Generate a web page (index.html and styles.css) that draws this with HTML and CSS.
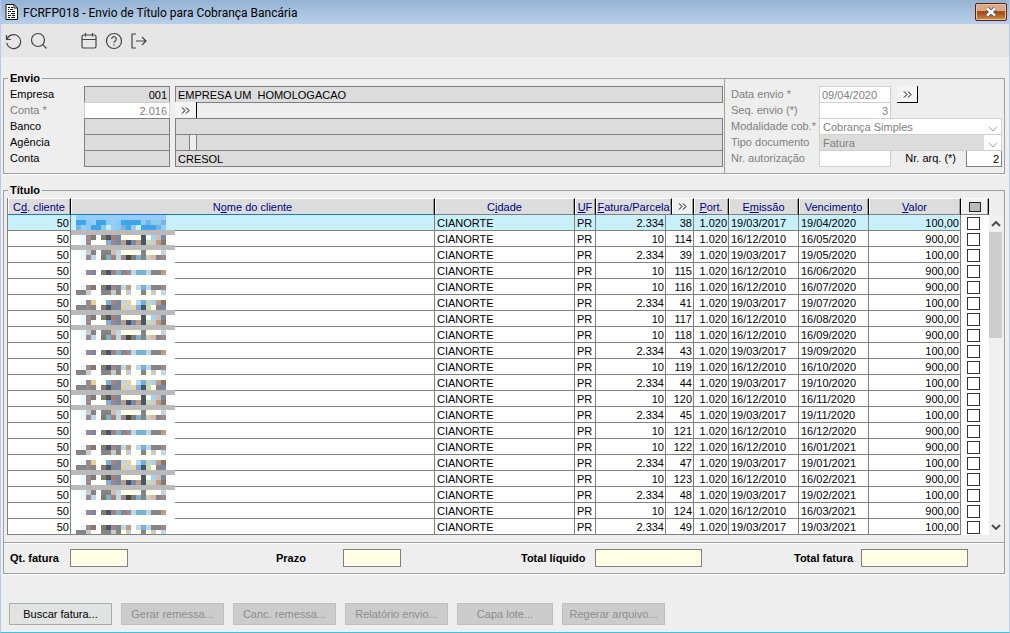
FILE: index.html
```html
<!DOCTYPE html>
<html lang="pt-BR">
<head>
    <meta charset="UTF-8">
    <meta name="viewport" content="width=device-width, initial-scale=1.0">
    <title>FCRFP018 - Envio de Título para Cobrança Bancária</title>
    <link rel="stylesheet" href="styles.css">
</head>
<body>
    <div class="window">
        <header class="titlebar">
            <svg class="app-icon" width="14" height="16" viewBox="0 0 14 16">
                <path d="M1 0.500h8l3.500 3.500v11.500H1z" fill="#fff" stroke="#111"/>
                <path d="M9 0.500v3.500h3.500" fill="none" stroke="#111"/>
                <path d="M3 3.500h2M6 3.500h2M3 5.500h1M5 5.500h3M3 7.500h3M7 7.500h3M3 9.500h1M6 9.500h4M3 11.500h3M7 11.500h3M3 13.500h2M6 13.500h4" stroke="#111"/>
            </svg>
            <h1>FCRFP018 - Envio de Título para Cobrança Bancária</h1>
            <button class="close" aria-label="Fechar">
                <svg width="12" height="10" viewBox="0 0 12 10">
                    <path d="M2 1.500l8 7M10 1.500l-8 7" stroke="#4a4a50" stroke-width="4"/>
                    <path d="M2 1.500l8 7M10 1.500l-8 7" stroke="#fff" stroke-width="2.400"/>
                </svg>
            </button>
        </header>

        <nav class="toolbar">
            <button aria-label="Desfazer">
                <svg viewBox="0 0 18 18"><path d="M1.500 3v4.500h4.500M2 7.500a7 7 0 1 1-.2 3.500"/></svg>
            </button>
            <button aria-label="Pesquisar">
                <svg viewBox="0 0 18 18"><circle cx="8" cy="8" r="6.500"/><path d="M12.700 12.700l3.800 3.800"/></svg>
            </button>
            <button class="apart" aria-label="Calendário">
                <svg viewBox="0 0 18 18"><rect x="2" y="3" width="14" height="13" rx="1.500"/><path d="M2 7.500h14M5.500 1v3.500M12.500 1v3.500"/></svg>
            </button>
            <button aria-label="Ajuda">
                <svg viewBox="0 0 18 18"><circle cx="9" cy="9" r="7.500"/><path d="M6.700 7a2.300 2.300 0 1 1 3.600 1.900c-.9.600-1.300.9-1.300 1.800M9 12.300v1.300"/></svg>
            </button>
            <button aria-label="Sair">
                <svg viewBox="0 0 18 18"><path d="M6 2H2v14h4M6 9h10M12 5l4 4-4 4"/></svg>
            </button>
        </nav>

        <main>
            <fieldset class="envio">
                <legend>Envio</legend>
                <div class="conta">
                    <label for="empresa">Empresa</label>
                    <input class="num" id="empresa" value="001" readonly>
                    <input class="desc" aria-label="Nome da empresa" value="EMPRESA UM  HOMOLOGACAO" readonly>

                    <label class="off" for="conta">Conta *</label>
                    <input class="num open" id="conta" value="2.016" readonly>
                    <button class="more" aria-label="Buscar conta"><svg viewBox="0 0 9 7"><path d="M1 .5l3 3-3 3M5 .5l3 3-3 3"/></svg></button>

                    <label for="banco">Banco</label>
                    <input id="banco" readonly>
                    <input class="desc" aria-label="Nome do banco" readonly>

                    <label for="agencia">Agência</label>
                    <input id="agencia" readonly>
                    <div class="desc split">
                        <input aria-label="Dígito da agência" readonly>
                        <input aria-label="Nome da agência" readonly>
                    </div>

                    <label for="conta_nr">Conta</label>
                    <input id="conta_nr" readonly>
                    <input class="desc" aria-label="Nome da conta" value="CRESOL" readonly>
                </div>
                <div class="dados">
                    <label for="data">Data envio *</label>
                    <input class="open" id="data" value="09/04/2020" readonly>
                    <button class="more raised" aria-label="Escolher data"><svg viewBox="0 0 9 7"><path d="M1 .5l3 3-3 3M5 .5l3 3-3 3"/></svg></button>

                    <label for="seq">Seq. envio (*)</label>
                    <input class="num open" id="seq" value="3" readonly>

                    <label for="modalidade">Modalidade cob.*</label>
                    <div class="combo">
                        <select id="modalidade"><option>Cobrança Simples</option></select>
                        <svg viewBox="0 0 10 6"><path d="M1 1l4 4 4-4"/></svg>
                    </div>

                    <label for="tipo">Tipo documento</label>
                    <div class="combo gray">
                        <select id="tipo"><option>Fatura</option></select>
                        <svg viewBox="0 0 10 6"><path d="M1 1l4 4 4-4"/></svg>
                    </div>

                    <label for="autorizacao">Nr. autorização</label>
                    <input class="open" id="autorizacao">
                    <div class="arquivo">
                        <label for="arquivo">Nr. arq. (*)</label>
                        <input class="num" id="arquivo" value="2">
                    </div>
                </div>
            </fieldset>

            <fieldset class="titulo">
                <legend>Título</legend>
                <div class="grid">
                    <table>
                        <colgroup>
                            <col class="c-cd"><col><col class="c-cidade"><col class="c-uf"><col class="c-data">
                            <col class="c-fill"><col class="c-more"><col class="c-port"><col class="c-data"><col class="c-data">
                            <col class="c-valor"><col class="c-check">
                        </colgroup>
                        <thead>
                            <tr>
                                <th>C<u>d</u>. cliente</th>
                                <th>N<u>o</u>me do cliente</th>
                                <th>C<u>i</u>dade</th>
                                <th><u>U</u>F</th>
                                <th colspan="2"><u>F</u>atura/Parcela</th>
                                <th class="light"><button aria-label="Ordenar"><svg viewBox="0 0 9 7"><path d="M1 .5l3 3-3 3M5 .5l3 3-3 3"/></svg></button></th>
                                <th><u>P</u>ort.</th>
                                <th>E<u>m</u>issão</th>
                                <th>Vencimen<u>t</u>o</th>
                                <th><u>V</u>alor</th>
                                <th class="light"><button aria-label="Marcar todos"><i class="mark"></i></button></th>
                            </tr>
                        </thead>
                        <tbody id="rows"></tbody>
                    </table>
                    <div class="scroll">
                        <button aria-label="Subir"><svg viewBox="0 0 10 6"><path d="M1 5l4-4 4 4"/></svg></button>
                        <div class="thumb"></div>
                        <button aria-label="Descer"><svg viewBox="0 0 10 6"><path d="M1 1l4 4 4-4"/></svg></button>
                    </div>
                    <svg class="mosaic" id="mosaic" width="104" height="319" shape-rendering="crispEdges"></svg>
                </div>
                <div class="totais">
                    <div><label for="qt">Qt. fatura</label><input id="qt" readonly></div>
                    <div><label for="prazo">Prazo</label><input id="prazo" readonly></div>
                    <div class="wide"><label for="liquido">Total líquido</label><input id="liquido" readonly></div>
                    <div class="wide"><label for="total">Total fatura</label><input id="total" readonly></div>
                </div>
            </fieldset>

            <div class="actions">
                <button>Buscar fatura...</button>
                <button disabled>Gerar remessa...</button>
                <button disabled>Canc. remessa...</button>
                <button disabled>Relatório envio...</button>
                <button class="short" disabled>Capa lote...</button>
                <button disabled>Regerar arquivo...</button>
            </div>
        </main>
    </div>
    <script src="script.js"></script>
</body>
</html>
```
FILE: styles.css
```css
* {
    box-sizing: border-box;
}
body {
    margin: 0;
    font-family: "Liberation Sans", Arial, sans-serif;
    font-size: 11px;
    line-height: 14px;
    color: #000;
    background-color: #eeeeee;
}
button, input, select {
    font: inherit;
    color: inherit;
    margin: 0;
    padding: 0;
    border-radius: 0;
}
svg {
    fill: none;
    display: block;
}
.window {
    min-height: 100vh;
    border: 1px solid #b4cbe9;
    border-top: 0;
    border-bottom-color: #35c4e6;
}

/* title bar */
.titlebar {
    display: flex;
    align-items: center;
    height: 24px;
    padding: 0 2px 0 4px;
    background: linear-gradient(#94b3d3, #b9cfe9);
}
.titlebar h1 {
    flex: 1;
    margin: 2px 0 0 4px;
    font-family: Roboto, sans-serif;
    font-size: 12px;
    font-weight: normal;
}
.close {
    display: flex;
    align-items: center;
    justify-content: center;
    width: 32px;
    height: 18px;
    border: 1px solid #5c1f1c;
    border-radius: 2px;
    box-shadow: inset 0 0 0 1px #e8c3a0;
    background: linear-gradient(#d9a988 0 45%, #a8501c 45% 60%, #d59246);
}

/* toolbar */
.toolbar {
    display: flex;
    align-items: center;
    gap: 7px;
    height: 33px;
    padding-left: 4px;
    background-color: #e6e6e6;
}
.toolbar button {
    width: 18px;
    height: 18px;
    border: 0;
    background: none;
}
.toolbar .apart {
    margin-left: 25px;
}
.toolbar svg {
    stroke: #444;
    stroke-width: 1.2;
}

main {
    padding: 14px 4px 4px 2px;
}
fieldset {
    margin: 0;
    min-width: 0;
    border: 1px solid #a0a0a0;
    box-shadow: 0 1px #fff;
}
legend {
    padding: 0 2px;
    margin-left: 4px;
    font-weight: bold;
}
input {
    width: 100%;
    min-width: 0;
    height: 17px;
    padding: 0 2px;
    border: 1px solid #808080;
    background-color: #dcdcdc;
}
.num {
    text-align: right;
}

/* envio */
.envio {
    display: flex;
    padding: 1px 2px 7px 6px;
}
.envio legend {
    margin-left: -2px;
}
.envio label {
    line-height: 17px;
}
.conta {
    flex: 1;
    display: grid;
    grid-template-columns: 74px 86px 1fr;
    grid-auto-rows: 16px;
    padding-right: 1px;
}
.conta .desc, .conta .more {
    margin-left: 5px;
    width: auto;
}
.split {
    display: flex;
    gap: 6px;
}
.split input:first-child {
    width: 15px;
}
.split input:last-child {
    flex: 1;
}
.off, .dados > label {
    color: #808080;
}
.open {
    color: #808080;
    background-color: #fff;
    border-color: #d0d0d0;
}
.more {
    width: 22px;
    height: 16px;
    border: 0;
    border-right: 1px solid #000;
    background-color: #f4f4f4;
}
.conta .more {
    width: 22px;
}
.more svg, .light svg {
    width: 9px;
    height: 7px;
    margin: auto;
    stroke: #000;
}
.dados {
    display: grid;
    grid-template-columns: 88px 72px 111px;
    grid-auto-rows: 16px;
    margin: -8px 0 -7px;
    padding: 8px 0 0 6px;
    border-left: 1px solid #a0a0a0;
}
.dados > label {
    grid-column: 1;
}
.dados label {
    white-space: nowrap;
}
.dados .raised {
    width: 21px;
    height: 17px;
    margin-left: 6px;
    border-bottom: 1px solid #000;
}
.dados > .combo {
    grid-column: 2 / 4;
}
.combo {
    position: relative;
    height: 17px;
    border: 1px solid #d0d0d0;
    background-color: #fff;
    color: #808080;
}
.combo select {
    appearance: none;
    display: block;
    width: 100%;
    height: 15px;
    padding-left: 3px;
    border: 0;
    background: none;
}
.gray select {
    width: calc(100% - 17px);
    background-color: #dcdcdc;
}
.combo svg {
    position: absolute;
    right: 3px;
    top: 7px;
    width: 10px;
    height: 6px;
    stroke: #a0a0a0;
}
.arquivo {
    display: flex;
    justify-content: flex-end;
    gap: 10px;
}
.arquivo input {
    width: 36px;
    background-color: #fff;
}

/* titulo */
.titulo {
    margin-top: 9px;
    padding: 1px 0 0;
}
.grid {
    position: relative;
    display: flex;
    margin: 0 2px 0 3px;
}
table {
    flex: 1;
    table-layout: fixed;
    width: 100%;
    border-collapse: separate;
    border-spacing: 0;
    border-left: 1px solid #808080;
    background-color: #fff;
}
.c-cd { width: 63px; }
.c-cidade { width: 140px; }
.c-uf { width: 21px; }
.c-data { width: 70px; }
.c-fill { width: 6px; }
.c-more { width: 22px; }
.c-port { width: 35px; }
.c-valor { width: 92px; }
.c-check { width: 28px; }
th {
    height: 17px;
    padding: 0;
    font-weight: normal;
    white-space: nowrap;
    color: #000080;
    background-color: #dcdcdc;
    border-top: 1px solid #fff;
    border-right: 1px solid #000;
    border-bottom: 1px solid #808080;
    box-shadow: inset 1px 0 #fff, inset -1px 0 #a0a0a0;
}
th:first-child, th:nth-child(2) {
    border-bottom-color: #1c78c8;
}
.light {
    background-color: #f0f0f0;
}
.light button {
    display: flex;
    width: 100%;
    height: 15px;
    border: 0;
    background: none;
}
.mark {
    width: 12px;
    height: 10px;
    margin: auto;
    border: 1px solid #222;
    background-color: #b8bcb8;
}
td {
    height: 16px;
    padding: 1px 1px 0 2px;
    line-height: 14px;
    white-space: nowrap;
    border-right: 1px solid #808080;
    border-bottom: 1px solid #808080;
}
td.num {
    padding-left: 0;
}
td:last-child {
    padding: 0 0 0 6px;
    border: 0;
}
.selected td:not(:last-child) {
    background-color: #c8effa;
}
td input {
    appearance: none;
    display: block;
    width: 13px;
    height: 13px;
    padding: 0;
    border: 1px solid #333;
    background-color: #fff;
}
.mosaic {
    position: absolute;
    left: 64px;
    top: 17px;
}
.scroll {
    display: flex;
    flex-direction: column;
    width: 13px;
    margin-top: 17px;
    background-color: #f0f0f0;
}
.scroll button {
    height: 17px;
    border: 0;
    background: none;
}
.scroll button:last-child {
    margin-top: auto;
}
.scroll svg {
    width: 10px;
    height: 6px;
    margin: auto;
    stroke: #505050;
    stroke-width: 2;
}
.thumb {
    height: 106px;
    background-color: #cdcdcd;
}
.totais {
    display: grid;
    grid-template-columns: 266px 245px 273px 1fr;
    margin-top: 7px;
    padding: 6px 0 6px 6px;
    border-top: 1px solid #a0a0a0;
    box-shadow: inset 0 1px #fff;
}
.totais div {
    display: flex;
    align-items: center;
    font-weight: bold;
}
.totais label {
    width: 67px;
}
.totais div:first-child label {
    width: 60px;
}
.totais .wide:nth-child(3) label {
    width: 74px;
}
.totais input {
    width: 58px;
    height: 18px;
    background-color: #ffffe6;
}
.totais .wide input {
    width: 107px;
}

/* bottom buttons */
.actions {
    display: flex;
    gap: 9px;
    margin: 29px 0 0 6px;
}
.actions button {
    width: 103px;
    height: 22px;
    border: 1px solid #a8aca4;
    background-color: #e1e3e3;
}
.actions .short {
    width: 96px;
}
.actions button:disabled {
    color: #8c8c8c;
    border-color: #bfbfbf;
    background-color: #cccccc;
}
```
FILE: script.js
```js
// fatura, parcela, vencimento
const titulos = [
    ["2.334", 38, "19/04/2020"],
    ["10", 114, "16/05/2020"],
    ["2.334", 39, "19/05/2020"],
    ["10", 115, "16/06/2020"],
    ["10", 116, "16/07/2020"],
    ["2.334", 41, "19/07/2020"],
    ["10", 117, "16/08/2020"],
    ["10", 118, "16/09/2020"],
    ["2.334", 43, "19/09/2020"],
    ["10", 119, "16/10/2020"],
    ["2.334", 44, "19/10/2020"],
    ["10", 120, "16/11/2020"],
    ["2.334", 45, "19/11/2020"],
    ["10", 121, "16/12/2020"],
    ["10", 122, "16/01/2021"],
    ["2.334", 47, "19/01/2021"],
    ["10", 123, "16/02/2021"],
    ["2.334", 48, "19/02/2021"],
    ["10", 124, "16/03/2021"],
    ["2.334", 49, "19/03/2021"]
];

document.querySelector("#rows").innerHTML = titulos.map(([fatura, parcela, venc], i) => {
    const nova = fatura === "2.334";
    return `<tr class="${i === 0 ? "selected" : ""}">
        <td class="num">50</td><td></td><td>CIANORTE</td><td>PR</td>
        <td class="num">${fatura}</td><td class="num" colspan="2">${parcela}</td>
        <td class="num">1.020</td><td>${nova ? "19/03/2017" : "16/12/2010"}</td><td>${venc}</td>
        <td class="num">${venc.startsWith("19") ? "100,00" : "900,00"}</td>
        <td><input type="checkbox" aria-label="Selecionar parcela ${parcela}"></td>
    </tr>`;
}).join("");

// client names are hidden behind 5px tiles
const cores = {
    w: "#e8f8ff", m: "#9c8890", b: "#7888a8", n: "#887870", y: "#fffde4", k: "#807c6c",
    d: "#46566e", r: "#a88070", s: "#78b0d8", g: "#858585", l: "#bcd8ec", L: "#a0d4f0",
    t: "#d4bca8", p: "#c09c84", c: "#c8ccc8", o: "#ecd09c", v: "#c8d8b8", B: "#484848",
    1: "#98ccf8", 2: "#40a4e8", 3: "#88ccf0", 4: "#78b0e8", 5: "#c8effa"
};
const topo = [
    "111111111111111111",
    "223122313222234334",
    "413223513421522241"
];
const bloco = [
    ".wmk.kdrbyy.ydyLtb",
    ".wm..ysmbpdbpdvcpn",
    "bar",
    ".wcg.ggtlyyy.gy..l",
    ".wml.ksrlmBksgctgm",
    "", "",
    ".wmb.kdrsgmlsslggp",
    "", "",
    ".wmn.kdmglp.lslggm",
    "ggc..ggcgyc.ygyc.l",
    "",
    ".wmo.ysmglo.lsvLpn",
    "ggmg.kdgbolosdvygb",
    "bar"
];

let tiles = '<rect y="15" width="104" height="304" fill="#fff"/>';
function linha(texto, y) {
    if (texto === "bar") {
        tiles += `<rect y="${y}" width="104" height="5" fill="#bababa"/>`;
        return;
    }
    [...texto].forEach((letra, i) => {
        if (cores[letra]) {
            tiles += `<rect x="${5 + i * 5}" y="${y}" width="5" height="5" fill="${cores[letra]}"/>`;
        }
    });
}
topo.forEach((texto, i) => linha(texto, i * 5));
linha("bar", 15);
for (let i = 0; i < 60; i++) {
    linha(bloco[i % 16], 20 + i * 5);
}
document.querySelector("#mosaic").innerHTML = tiles;
```
